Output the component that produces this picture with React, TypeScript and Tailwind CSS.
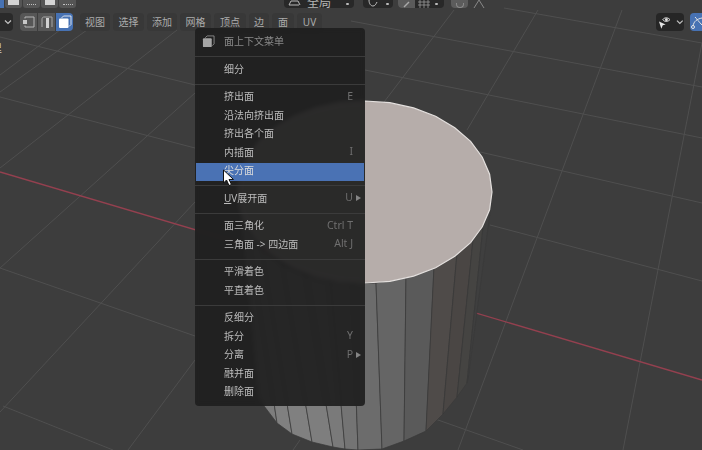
import React from 'react';

type Pt = [number, number];

// Cylinder side: rim points on the top and bottom, strip colours left to right
const rimTop: Pt[] = [[239, 195], [248, 230], [262, 250], [282, 265], [305, 275], [330, 281], [352, 284], [376, 283], [406, 277], [434, 267], [457, 253], [473, 240], [483, 227], [491, 205]];
const rimBottom: Pt[] = [[258, 398], [277, 423], [292, 434], [312, 442], [333, 447], [345, 449], [358, 450], [382, 449], [404, 441], [426, 431], [443, 414], [457, 397], [467, 383], [468, 380]];
const stripColors = ['#7d7d7d', '#808080', '#808080', '#7e7e7e', '#7a7a7a', '#747474', '#6c6c6c', '#656565', '#5a5a5a', '#4f4b49', '#4a4644', '#454442', '#3f3f3f'];

const topFace = Array.from({ length: 32 }, (_, i) => {
  const a = (i / 32) * Math.PI * 2;
  return `${(365 + 127 * Math.cos(a)).toFixed(1)},${(192 + 91 * Math.sin(a)).toFixed(1)}`;
}).join(' ');

// Floor grid, in screen coordinates
const gridLines: [number, number, number, number][] = [
  [0, 37, 195, 85], [0, 97, 195, 148], [0, 268, 195, 336], [3, 406, 113, 450],
  [0, 92, 87, 30], [0, 168, 177, 30], [0, 268, 195, 93], [0, 412, 195, 202], [128, 450, 195, 360],
  [351, 21, 702, 87], [365, 70, 702, 138], [380, 129, 702, 203], [490, 225, 702, 281],
  [387, 402, 523, 450], [504, 8, 702, 43],
  [538, 10, 467, 130], [454, 10, 378, 110], [622, 10, 458, 450],
  [702, 43, 623, 450], [300, 440, 293, 450], [60, 30, 0, 75],
];

function Scene() {
  return (
    <svg className="absolute inset-0" width="702" height="450" viewBox="0 0 702 450">
      {gridLines.map(([x1, y1, x2, y2], i) => (
        <line key={i} x1={x1} y1={y1} x2={x2} y2={y2} stroke="#4f4f4f" strokeWidth="1" />
      ))}
      <line x1="0" y1="172" x2="702" y2="380" stroke="#94404f" strokeWidth="1.4" />
      {stripColors.map((c, i) => (
        <polygon
          key={i}
          points={`${rimTop[i].join(',')} ${rimTop[i + 1].join(',')} ${rimBottom[i + 1].join(',')} ${rimBottom[i].join(',')}`}
          fill={c}
          stroke="#3a3a3a"
          strokeWidth="0.7"
        />
      ))}
      <polygon points={topFace} fill="#b6adaa" stroke="#e4e0de" strokeWidth="1.2" />
    </svg>
  );
}

function VertexIcon() {
  return (
    <svg width="14" height="14" viewBox="0 0 14 14" fill="none">
      <path d="M3 3.5V2h9v10H3v-1.500" stroke="#b5b5b5" strokeWidth="1" />
      <rect x="1" y="5" width="4" height="4" fill="#c8c8c8" />
    </svg>
  );
}

function EdgeIcon() {
  return (
    <svg width="14" height="14" viewBox="0 0 14 14" fill="none">
      <path d="M2 12V4c0-1.500 1-2 2-2h8v10" stroke="#a8a8a8" strokeWidth="1" />
      <rect x="6" y="3" width="3" height="10" fill="#d0d0d0" />
    </svg>
  );
}

function FaceIcon({ size = 14, back = '#ffffff' }: { size?: number; back?: string }) {
  return (
    <svg width={size} height={size} viewBox="0 0 14 14" fill="none">
      <path d="M3.500 3l2-2H13v8.500l-2 2" stroke={back} strokeWidth="1" opacity="0.8" />
      <rect x="1" y="3.500" width="9.500" height="9.500" rx="1" fill={back} />
    </svg>
  );
}

function Chevron() {
  return (
    <svg width="8" height="6" viewBox="0 0 8 6" fill="none">
      <path d="M1 1.500l3 3 3-3" stroke="#c4c4c4" strokeWidth="1.200" />
    </svg>
  );
}

function TopRow() {
  return (
    <div className="flex h-[8px] items-end overflow-hidden">
      <div className="h-[8px] w-[4px] bg-[#4772b3]" />
      <div className="ml-[1px] flex gap-[1px]">
        <div className="flex h-[8px] w-[17px] justify-center rounded-b-[3px] bg-[#555555]"><div className="h-[5px] w-[11px] bg-[#d4d4d4]" /></div>
        <div className="flex h-[8px] w-[17px] justify-center rounded-b-[3px] bg-[#555555]"><div className="h-[5px] w-[9px] border-b border-dotted border-[#c0c0c0]" /></div>
        <div className="flex h-[8px] w-[17px] justify-center rounded-b-[3px] bg-[#555555]"><div className="h-[5px] w-[10px] bg-[#d4d4d4]" /></div>
        <div className="flex h-[8px] w-[17px] justify-center rounded-b-[3px] bg-[#555555]"><div className="h-[5px] w-[10px] border-b border-dotted border-[#c0c0c0]" /></div>
      </div>
      <div className="ml-[208px] flex h-[8px] w-[70px] items-end overflow-hidden rounded-b-[4px] bg-[#282828] pl-[4px] pr-[5px]">
        <svg width="14" height="7" viewBox="0 0 14 7" fill="none" className="mb-[1px]">
          <path d="M1 5h10M1 5l2-4h7l2 4" stroke="#b8b8b8" strokeWidth="1" />
        </svg>
        <span className="mb-[-1px] ml-[5px] text-[12px] leading-[12px] text-[#b5b5b5]">全局</span>
        <span className="mb-[3px] ml-auto h-[2px] w-[3px] rounded-full bg-[#bbbbbb]" />
      </div>
      <div className="ml-[9px] flex h-[8px] w-[30px] items-end justify-between rounded-b-[4px] bg-[#282828] px-[4px]">
        <svg width="12" height="8" viewBox="0 0 12 8" fill="none"><path d="M2 0c0 4 2 6 4 6s3-2 4-4" stroke="#c0c0c0" strokeWidth="1" /></svg>
        <span className="mb-[3px] h-[2px] w-[3px] rounded-full bg-[#bbbbbb]" />
      </div>
      <div className="ml-[5px] flex h-[8px] w-[46px] items-end rounded-b-[4px] bg-[#282828]">
        <div className="flex h-[8px] w-[17px] items-end justify-center rounded-bl-[4px] bg-[#5a5a5a]">
          <svg width="9" height="7" viewBox="0 0 9 7" fill="none"><path d="M2 6l5-5" stroke="#a8a8a8" strokeWidth="1.500" /></svg>
        </div>
        <svg width="14" height="8" viewBox="0 0 14 8" fill="none" className="ml-[2px]"><path d="M1 2h12M1 5h12M3 0v8M7 0v8M11 0v8" stroke="#9a9a9a" strokeWidth="0.800" /></svg>
        <span className="mb-[3px] ml-[4px] h-[2px] w-[3px] rounded-full bg-[#bbbbbb]" />
      </div>
      <div className="ml-[7px] flex h-[8px] w-[17px] items-end justify-center rounded-b-[4px] bg-[#5c5c5c]">
        <div className="h-[5px] w-[8px] rounded-b-full border border-t-0 border-[#8a8a8a]" />
      </div>
      <svg width="14" height="8" viewBox="0 0 14 8" fill="none" className="ml-[4px]"><path d="M7 0L2 8M7 0l5 8" stroke="#888888" strokeWidth="1" /></svg>
    </div>
  );
}

const tabs: [string, string][] = [
  ['视图', 'w-[30px]'], ['选择', 'w-[31px]'], ['添加', 'w-[30px]'], ['网格', 'w-[31px]'],
  ['顶点', 'w-[32px]'], ['边', 'w-[20px]'], ['面', 'w-[22px]'], ['UV', 'w-[25px]'],
];

function HeaderRow() {
  return (
    <div className="mt-[5px] flex h-[18px] items-center">
      <div className="flex h-[18px] w-[13px] items-center justify-end rounded-r-[4px] bg-[#2a2a2a] pr-[1px]">
        <Chevron />
      </div>
      <div className="ml-[7px] flex h-[18px] gap-[1px]">
        <div className="flex w-[17px] items-center justify-center rounded-l-[4px] bg-[#565656]"><VertexIcon /></div>
        <div className="flex w-[17px] items-center justify-center bg-[#565656]"><EdgeIcon /></div>
        <div className="flex w-[17px] items-center justify-center rounded-r-[4px] bg-[#4772b3]"><FaceIcon /></div>
      </div>
      <div className="ml-[7px] flex h-[18px] gap-[3px]">
        {tabs.map(([label, width]) => (
          <div key={label} className={`flex ${width} items-center justify-center rounded-[4px] bg-[#383838] text-[10px] text-[#ababab]`}>
            {label}
          </div>
        ))}
      </div>
      <div className="ml-[334px] flex h-[18px] w-[28px] items-center gap-[4px] rounded-[4px] bg-[#262626] pl-[2px]">
        <svg width="15" height="15" viewBox="0 0 15 15">
          <path d="M5 4.500C6.500 2 10.500 2 12.500 4.500 10.500 7 6.500 7 5 4.500z" fill="none" stroke="#e6e6e6" strokeWidth="1" />
          <circle cx="8.800" cy="4.500" r="1.500" fill="#e6e6e6" />
          <path d="M1 6.500l7 3-3 1-1.500 3.500z" fill="#e6e6e6" />
        </svg>
        <Chevron />
      </div>
      <div className="ml-[6px] flex h-[18px] w-[12px] items-center overflow-hidden rounded-l-[4px] bg-[#4772b3]">
        <svg width="12" height="16" viewBox="0 0 12 16" fill="none">
          <path d="M3 12C4 7 7 5 12 4M5 3c2 2 4 5 7 8" stroke="#e4e4e4" strokeWidth="1" />
          <circle cx="3" cy="13" r="1.500" stroke="#e4e4e4" />
        </svg>
      </div>
    </div>
  );
}

type Item = { label: React.ReactNode; key: string; hint?: string; arrow?: boolean; active?: boolean };

const menuGroups: Item[][] = [
  [{ key: 'subdivide', label: '细分' }],
  [
    { key: 'extrude', label: '挤出面', hint: 'E' },
    { key: 'normals', label: '沿法向挤出面' },
    { key: 'individual', label: '挤出各个面' },
    { key: 'inset', label: '内插面', hint: 'I' },
    { key: 'poke', label: '尖分面', active: true },
  ],
  [{ key: 'uv', label: <><span className="underline">U</span>V展开面</>, hint: 'U', arrow: true }],
  [
    { key: 'tris', label: '面三角化', hint: 'Ctrl T' },
    { key: 'quads', label: '三角面 -> 四边面', hint: 'Alt J' },
  ],
  [
    { key: 'smooth', label: '平滑着色' },
    { key: 'flat', label: '平直着色' },
  ],
  [
    { key: 'unsub', label: '反细分' },
    { key: 'split', label: '拆分', hint: 'Y' },
    { key: 'separate', label: '分离', hint: 'P', arrow: true },
    { key: 'merge', label: '融并面' },
    { key: 'delete', label: '删除面' },
  ],
];

function MenuSeparator() {
  return (
    <div className="flex h-[9px] items-center">
      <div className="h-[1px] w-full bg-[#3b3b3b]" />
    </div>
  );
}

function MenuRow({ item }: { item: Item }) {
  return (
    <div className={`mx-[1px] flex h-[18.5px] items-center justify-between pb-[2px] pl-[28px] text-[10px] ${item.active ? 'bg-[#4a72b4] text-[#dcdcdc]' : 'text-[#bdbdbd]'}`}>
      <span>{item.label}</span>
      {item.hint && (
        <span className={`flex items-center text-[10.5px] text-[#6f6f6f] ${item.arrow ? 'pr-[3px]' : 'pr-[11px]'}`}>
          {item.hint}
          {item.arrow && <span className="ml-[3px] h-0 w-0 border-y-[3px] border-l-[5px] border-y-transparent border-l-[#858585]" />}
        </span>
      )}
    </div>
  );
}

function FaceMenu() {
  return (
    <div className="absolute left-[195px] top-[28px] flex h-[378px] w-[170px] flex-col rounded-[4px] bg-[#1e1e1e]/92 backdrop-blur-[2px]">
      <div className="flex h-[24px] shrink-0 items-center pl-[7px] pt-[3px] text-[10px] text-[#8a8a8a]">
        <FaceIcon size={13} back="#a6a6a6" />
        <span className="ml-[9px]">面上下文菜单</span>
      </div>
      {menuGroups.map((group, i) => (
        <div key={i}>
          <MenuSeparator />
          {group.map((item) => <MenuRow key={item.key} item={item} />)}
        </div>
      ))}
    </div>
  );
}

export default function App() {
  return (
    <div className="relative h-[450px] w-[702px] overflow-hidden bg-[#3d3d3d] font-['Noto_Sans','Noto_Sans_CJK_SC',sans-serif]">
      <Scene />
      <div className="relative flex flex-col">
        <TopRow />
        <HeaderRow />
      </div>
      <span className="absolute left-[-8px] top-[43px] text-[10px] leading-[10px] text-[#d0d0d0]">里</span>
      <FaceMenu />
      {/* mouse pointer */}
      <svg className="absolute left-[222px] top-[169px]" width="13" height="18" viewBox="0 0 13 18">
        <path d="M1.500 1v13l3-3 2.500 5.500 2.500-1L7 10.500h4.500z" fill="#ffffff" stroke="#111111" strokeWidth="1" />
      </svg>
    </div>
  );
}
